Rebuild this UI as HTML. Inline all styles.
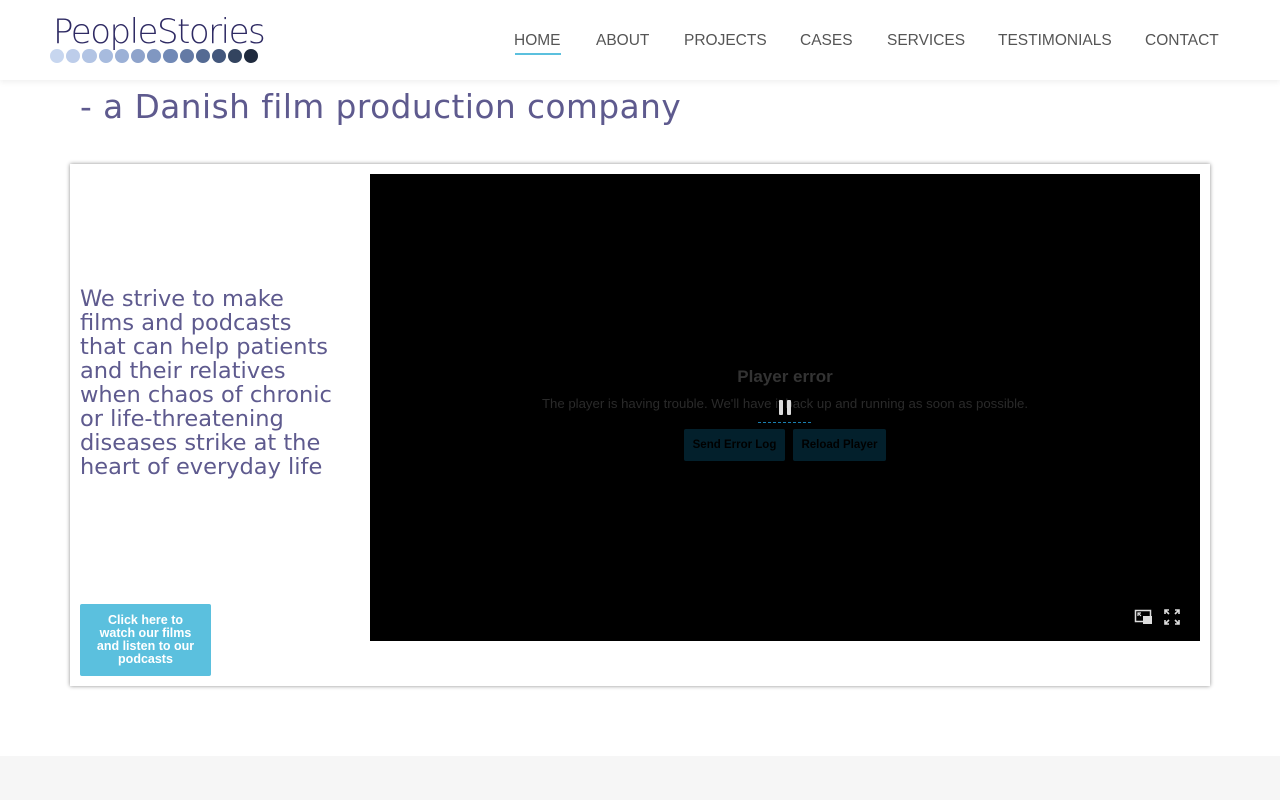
<!DOCTYPE html>
<html><head><meta charset="utf-8"><style>
body{margin:0;width:1280px;height:800px;background:#fff;font-family:"Liberation Sans",sans-serif;position:relative;overflow:hidden}
.hdr{position:absolute;left:0;top:0;width:1280px;height:80px;background:#fff;box-shadow:0 2px 6px rgba(0,0,0,.07);z-index:2}
.logo{position:absolute;left:53px;top:12px;font-size:34px;color:#2e2a63;letter-spacing:-1.5px;font-family:"DejaVu Sans","Liberation Sans",sans-serif;font-weight:300}
.dots{position:absolute;left:50px;top:49px;display:flex;gap:2px}
.dots i{width:14.2px;height:14.2px;border-radius:50%;display:block}
nav{position:absolute;top:32px;left:0;width:1280px;font-size:15.5px;color:#555}
nav span{position:absolute;white-space:nowrap}
.ul{position:absolute;left:515px;top:53px;width:46px;height:2px;background:#5bc0de}
h2{position:absolute;left:80px;top:88px;margin:0;font-weight:normal;font-size:32.7px;color:#5e5a8e;font-family:"DejaVu Sans",sans-serif;letter-spacing:0.5px}
.box{position:absolute;left:70px;top:164px;width:1140px;height:522px;background:#fff;box-shadow:0 0 4px rgba(0,0,0,.45)}
.txt{position:absolute;left:80px;top:287px;width:290px;font-size:22.5px;line-height:24px;color:#5e5a8e;font-family:"DejaVu Sans",sans-serif;white-space:nowrap}
.btn{position:absolute;left:80px;top:604px;width:131px;height:72px;background:#5bc0de;color:#fff;font-weight:bold;font-size:12.5px;line-height:13px;text-align:center;border-radius:2px;box-sizing:border-box;padding:10px 16px 0}
.vid{position:absolute;left:370px;top:174px;width:830px;height:467px;background:#000}
.foot{position:absolute;left:0;top:756px;width:1280px;height:44px;background:#f6f6f6}
</style></head><body>
<div class="hdr">
<div class="logo">PeopleStories</div>
<div class="dots">
<i style="background:#c7d6ef"></i><i style="background:#bdcdea"></i><i style="background:#b2c4e4"></i><i style="background:#a7bbde"></i><i style="background:#9bb0d6"></i><i style="background:#8ea3cb"></i><i style="background:#8097c1"></i><i style="background:#7189b6"></i><i style="background:#647aa5"></i><i style="background:#546a93"></i><i style="background:#43577c"></i><i style="background:#33445f"></i><i style="background:#1f2a3e"></i>
</div>
<nav>
<span style="left:514px">HOME</span><span style="left:596px">ABOUT</span><span style="left:684px">PROJECTS</span><span style="left:800px">CASES</span><span style="left:887px">SERVICES</span><span style="left:998px">TESTIMONIALS</span><span style="left:1145px">CONTACT</span>
</nav>
<div class="ul"></div>
</div>
<h2>- a Danish film production company</h2>
<div class="box"></div>
<div class="txt">We strive to make<br>films and podcasts<br>that can help patients<br>and their relatives<br>when chaos of chronic<br>or life-threatening<br>diseases strike at the<br>heart of everyday life</div>
<div class="btn">Click here to watch our films and listen to our podcasts</div>
<div class="vid">
<div style="position:absolute;left:0;width:830px;top:193px;text-align:center;color:#333;font-weight:bold;font-size:17px">Player error</div>
<div style="position:absolute;left:0;width:830px;top:222px;text-align:center;color:#2a2a2a;font-size:13.2px">The player is having trouble. We'll have it back up and running as soon as possible.</div>
<div style="position:absolute;left:409px;top:226px;width:4px;height:15px;background:#ddd;border-radius:1px"></div>
<div style="position:absolute;left:417px;top:226px;width:4px;height:15px;background:#ddd;border-radius:1px"></div>
<div style="position:absolute;left:388px;top:248px;width:53px;border-top:1px dashed #1a7fb0"></div>
<div style="position:absolute;left:314px;top:255px;width:101px;height:32px;background:#03202c;border-radius:2px;color:#000;font-weight:bold;font-size:11.5px;line-height:32px;text-align:center">Send Error Log</div>
<div style="position:absolute;left:423px;top:255px;width:93px;height:32px;background:#03202c;border-radius:2px;color:#000;font-weight:bold;font-size:11.5px;line-height:32px;text-align:center">Reload Player</div>
<svg style="position:absolute;left:764px;top:434px" width="20" height="18" viewBox="0 0 20 18"><rect x="1.5" y="2.5" width="15" height="11" fill="none" stroke="#ddd" stroke-width="1.5"/><rect x="9" y="8" width="9" height="8" fill="#ddd"/><path d="M4 5l3 3M4 8V5h3" stroke="#ddd" stroke-width="1.2" fill="none"/></svg>
<svg style="position:absolute;left:793px;top:434px" width="18" height="18" viewBox="0 0 18 18" fill="none" stroke="#ddd" stroke-width="1.6"><path d="M2 6V2h4M2 2l4 4M16 6V2h-4M16 2l-4 4M2 12v4h4M2 16l4-4M16 12v4h-4M16 16l-4-4"/></svg>
</div>
<div class="foot"></div>
</body></html>
